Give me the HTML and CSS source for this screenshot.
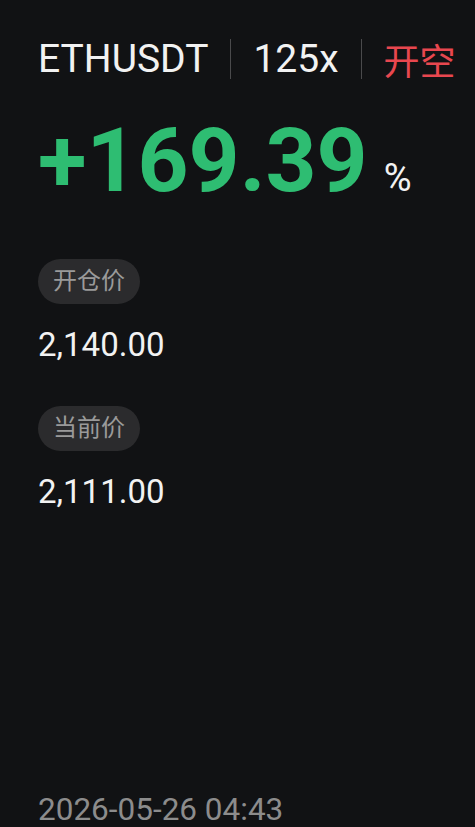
FILE: index.html
```html
<!DOCTYPE html>
<html lang="zh">
<head>
    <meta charset="UTF-8">
    <meta name="viewport" content="width=device-width, initial-scale=1.0">
    <title>ETHUSDT</title>
    <link rel="stylesheet" href="styles.css">
</head>
<body>
    <div class="card">
        <div class="head">
            <span class="pair">ETHUSDT</span>
            <span class="sep"></span>
            <span class="lev">125x</span>
            <span class="sep"></span>
            <span class="side">开空</span>
        </div>

        <div class="pnl">
            <span class="pnl-num">+169.39</span>
            <span class="pnl-unit">%</span>
        </div>

        <div class="field">
            <span class="tag">开仓价</span>
            <div class="price">2,140.00</div>
        </div>

        <div class="field">
            <span class="tag">当前价</span>
            <div class="price">2,111.00</div>
        </div>

        <div class="time">2026-05-26 04:43</div>
    </div>
</body>
</html>
```

FILE: styles.css
```css
body {
    margin: 0;
    background: #111214;
    font-family: Roboto, "Noto Sans CJK SC", sans-serif;
    color: #f2f2f2;
}

.card {
    height: 827px;
    padding: 0 0 0 38px;
    display: flex;
    flex-direction: column;
    box-sizing: border-box;
}

.head {
    display: flex;
    align-items: center;
    margin-top: 37px;
    height: 44px;
    font-size: 39px;
}

.sep {
    width: 1px;
    height: 40px;
    background: #4a4a4c;
    margin: 0 22px;
}

.side {
    color: #e8474f;
    font-size: 36px;
}

.pnl {
    display: flex;
    align-items: baseline;
    margin-top: 30px;
}

.pnl-num {
    font-size: 89px;
    font-weight: bold;
    color: #2ebd72;
    line-height: 100px;
}

.pnl-unit {
    font-size: 38px;
    margin-left: 16px;
}

.field {
    margin-top: 48px;
}

.field + .field {
    margin-top: 42px;
}

.tag {
    display: inline-block;
    background: #2b2b2d;
    color: #9a9a9a;
    font-size: 24px;
    line-height: 45px;
    padding: 0 15px;
    border-radius: 23px;
}

.price {
    font-size: 33px;
    margin-top: 22px;
    line-height: 38px;
}

.time {
    margin-top: auto;
    margin-bottom: 0;
    font-size: 31.5px;
    line-height: 34px;
    color: #8c8c8c;
}
```
